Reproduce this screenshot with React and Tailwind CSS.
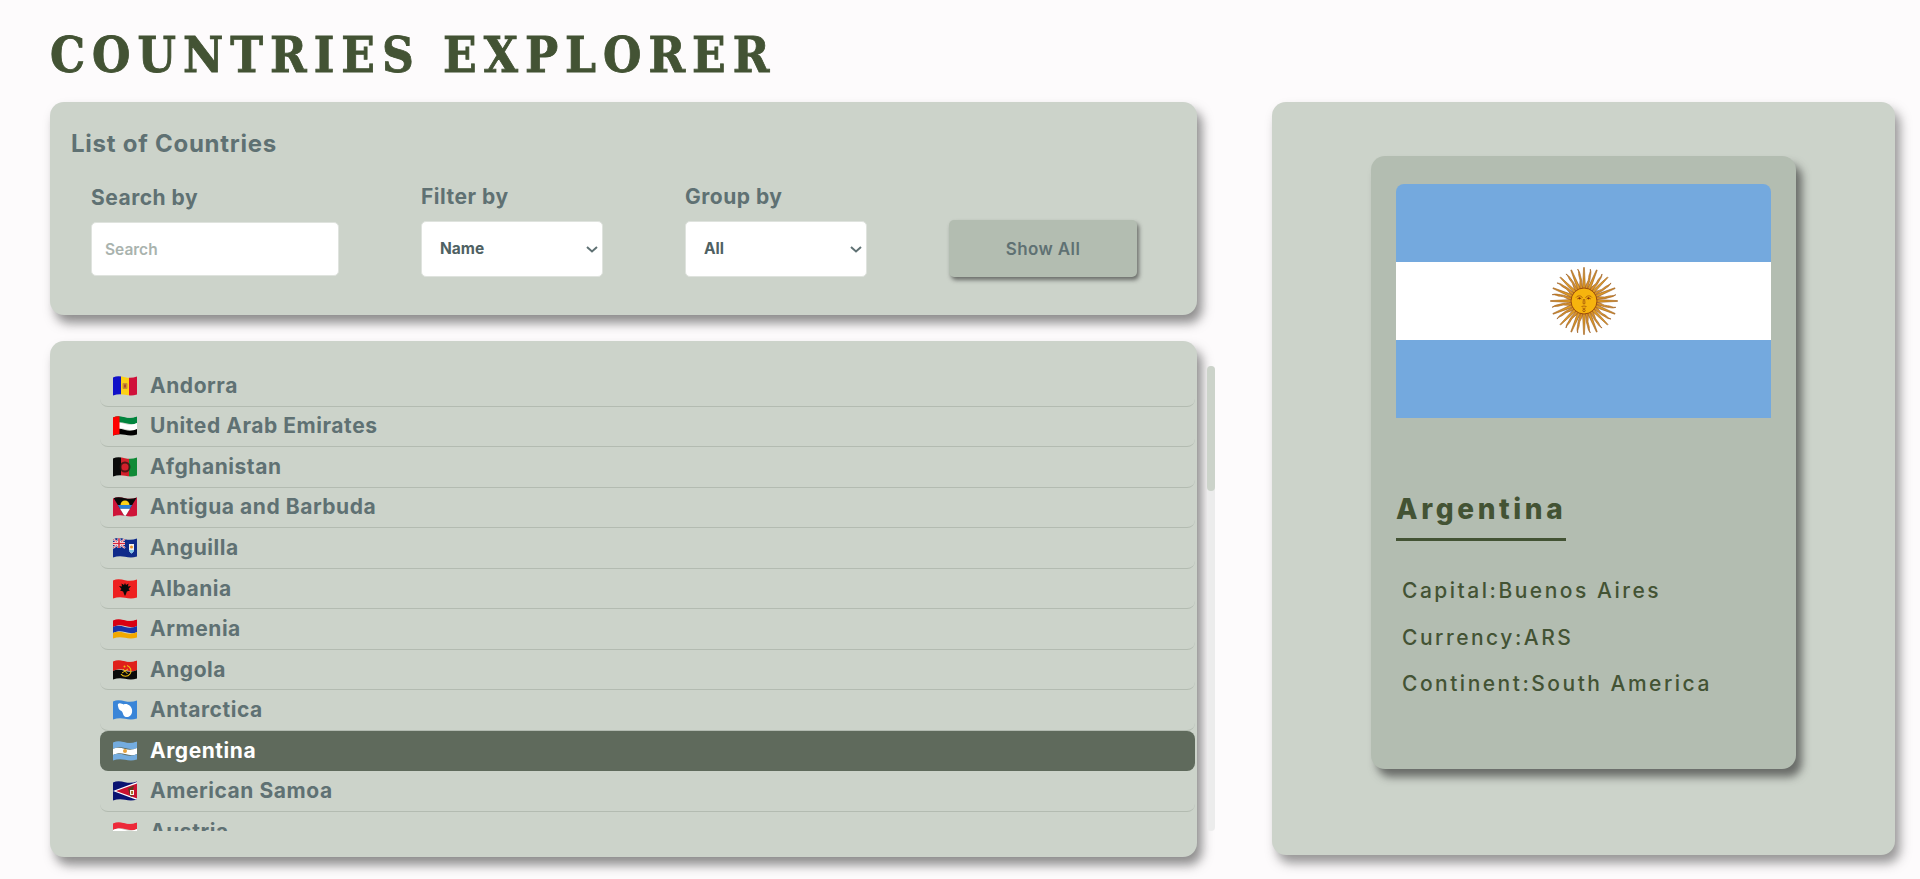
import React from "react";

const W = (y0, y1, fill, key) => (
  <path
    key={key}
    fill={fill}
    d={`M0 ${y0 + 1}C4 ${y0 - 1} 8 ${y0} 12 ${y0 + 1}S20 ${y0 + 2} 24 ${y0}V${y1}C20 ${y1 + 2} 16 ${y1 + 1} 12 ${y1}S4 ${y1 - 1} 0 ${y1 + 1}Z`}
  />
);

const Flag = ({ children }) => (
  <svg viewBox="0 0 24 20" className="w-6 h-5 shrink-0">
    <g clipPath="url(#flagwave)">{children}</g>
  </svg>
);

const flags = {
  ad: (
    <>
      <rect width="8" height="20" fill="#1010c8" />
      <rect x="8" width="8" height="20" fill="#fcd116" />
      <rect x="16" width="8" height="20" fill="#d0103a" />
      <rect x="9.5" y="7" width="5" height="6" rx="1" fill="#c7902f" />
      <rect x="11" y="8.5" width="2" height="3" fill="#b5452a" />
    </>
  ),
  ae: (
    <>
      {W(0, 7, "#00843d", 1)}
      {W(7, 13, "#ffffff", 2)}
      {W(13, 20, "#000000", 3)}
      <rect width="6.5" height="20" fill="#ff0000" />
    </>
  ),
  af: (
    <>
      <rect width="8" height="20" fill="#0a0a0a" />
      <rect x="8" width="8" height="20" fill="#d3202b" />
      <rect x="16" width="8" height="20" fill="#0f8a36" />
      <circle cx="12" cy="10" r="4.5" fill="none" stroke="#2a1410" strokeWidth="2" opacity="0.75" />
    </>
  ),
  ag: (
    <>
      <rect width="24" height="20" fill="#cf1439" />
      <path d="M0 0H24L12 20Z" fill="#0a0a0a" />
      <path d="M4.8 8H19.2L17 11.8H7Z" fill="#2a7fd6" />
      <path d="M7 11.8H17L12 20Z" fill="#ffffff" />
      <path d="M7.5 8a4.5 4.5 0 0 1 9 0Z" fill="#fcd116" />
    </>
  ),
  ai: (
    <>
      <rect width="24" height="20" fill="#0f2a8a" />
      <rect width="12" height="10" fill="#1b2f86" />
      <path d="M0 1L12 10M12 1L0 10" stroke="#fff" strokeWidth="2" />
      <path d="M0 1L12 10M12 1L0 10" stroke="#d5283c" strokeWidth="0.8" />
      <path d="M6 0V10M0 5.5H12" stroke="#fff" strokeWidth="3" />
      <path d="M6 0V10M0 5.5H12" stroke="#d5283c" strokeWidth="1.6" />
      <path d="M16 6H21V12C21 14 19 15 18.5 15.5C18 15 16 14 16 12Z" fill="#f4f1ec" />
      <path d="M16 12H21C21 14 19 15 18.5 15.5C18 15 16 14 16 12Z" fill="#7fc3e8" />
      <circle cx="18.5" cy="9" r="1.5" fill="#e8902a" />
    </>
  ),
  al: (
    <>
      <rect width="24" height="20" fill="#ee2020" />
      <path d="M12 4L13 6L15.5 4.5L15 7.5L18 7L15.5 10L17 11.5L13.8 12.5L13 15L12 17L11 15L10.2 12.5L7 11.5L8.5 10L6 7L9 7.5L8.5 4.5L11 6Z" fill="#0a0a0a" />
    </>
  ),
  am: (
    <>
      {W(0, 7, "#d90012", 1)}
      {W(7, 13, "#1a35a8", 2)}
      {W(13, 20, "#f2a800", 3)}
    </>
  ),
  ao: (
    <>
      {W(0, 10, "#e0201b", 1)}
      {W(10, 20, "#0a0a0a", 2)}
      <path d="M14 5.5A5.5 5.5 0 1 1 8 14" fill="none" stroke="#f0c010" strokeWidth="1.1" />
      <path d="M9 13L15 9M10 9L14.5 14" stroke="#f0c010" strokeWidth="1" />
      <circle cx="11.5" cy="6.5" r="1" fill="#f0c010" />
    </>
  ),
  aq: (
    <>
      <rect width="24" height="20" fill="#3a85d8" />
      <path d="M5 4C7 2.5 9 4 10.5 4.5C14 3 18 5.5 19 9.5C19.5 12.5 18.5 16 15 17C11 17.5 10.5 15 9.5 12.5C9 10.5 6 10.5 5.5 8C5.3 6.5 4.5 5.5 5 4Z" fill="#ffffff" />
    </>
  ),
  ar: (
    <>
      {W(0, 7, "#74acdf", 1)}
      {W(7, 13, "#ffffff", 2)}
      {W(13, 20, "#74acdf", 3)}
      <circle cx="12" cy="10" r="2" fill="#e8a33c" />
    </>
  ),
  as: (
    <>
      <rect width="24" height="20" fill="#0a1272" />
      <path d="M0 10L24 1V19Z" fill="#ffffff" />
      <path d="M3 10L24 2.6V17.4Z" fill="#c9102f" />
      <path d="M15 7.5L21 4.5L20 9L21 13L18 16L16.5 13Z" fill="#5a3a20" />
      <path d="M17 9H21V14H17Z" fill="#f4f0e6" />
      <path d="M18 10H20V13H18Z" fill="#a8722a" />
    </>
  ),
  at: (
    <>
      {W(0, 7, "#ed2939", 1)}
      {W(7, 13, "#ffffff", 2)}
      {W(13, 20, "#ed2939", 3)}
    </>
  ),
};

const countries = [
  ["ad", "Andorra"],
  ["ae", "United Arab Emirates"],
  ["af", "Afghanistan"],
  ["ag", "Antigua and Barbuda"],
  ["ai", "Anguilla"],
  ["al", "Albania"],
  ["am", "Armenia"],
  ["ao", "Angola"],
  ["aq", "Antarctica"],
  ["ar", "Argentina"],
  ["as", "American Samoa"],
  ["at", "Austria"],
];

const Sun = () => {
  const rays = Array.from({ length: 32 }, (_, i) => i * 11.25);
  return (
    <svg viewBox="-34 -34 68 68" className="w-[68px] h-[68px] shrink-0">
      {rays.map((a, i) =>
        i % 2 === 0 ? (
          <path
            key={a}
            transform={`rotate(${a})`}
            d="M-1.5 -12L-0.4 -33.5H0.4L1.5 -12Z"
            fill="#dc9a26"
            stroke="#96551a"
            strokeWidth="0.55"
          />
        ) : (
          <path
            key={a}
            transform={`rotate(${a})`}
            d="M-1.2 -12C-2.2 -17 1 -20 0 -24C-0.6 -27 1 -29 0 -32.5C2 -29 1.2 -27 1.6 -24C2.2 -20 0.6 -17 1.4 -12Z"
            fill="#d8932a"
            stroke="#96551a"
            strokeWidth="0.55"
          />
        )
      )}
      <circle r="13" fill="#f6b40e" stroke="#85340a" strokeWidth="0.8" />
      <g fill="none" stroke="#85340a" strokeWidth="0.6">
        <path d="M-8 -3.5C-6 -6 -2.5 -5.5 -1.5 -3M8 -3.5C6 -6 2.5 -5.5 1.5 -3" />
        <path d="M-7 -2Q-4.5 -4 -2.5 -2M7 -2Q4.5 -4 2.5 -2" />
        <path d="M-0.6 -2L-1 2.5Q0 3.5 1 2.5L0.6 -2" />
        <path d="M-2.5 5.5Q0 4.5 2.5 5.5M-1.6 7Q0 8 1.6 7" />
        <circle cx="0" cy="9.5" r="1.2" />
      </g>
      <circle cx="-4.5" cy="-2.7" r="1.1" fill="#85340a" />
      <circle cx="4.5" cy="-2.7" r="1.1" fill="#85340a" />
    </svg>
  );
};

const body = "font-['Inter','Liberation_Sans',sans-serif]";
const label = "text-[21px] leading-[26px] font-bold tracking-[0.5px] text-[#5f7173]";

const Select = ({ value }) => (
  <div className="relative">
    <select className={`appearance-none h-[56px] w-full rounded-[5px] border border-[#dfe3de] bg-white pl-[18px] text-[15.5px] font-bold text-[#4f6163] ${body}`}>
      <option>{value}</option>
    </select>
    <svg viewBox="0 0 12 7" className="absolute right-[5px] top-[25px] w-3 h-[7px] pointer-events-none">
      <path d="M1 1L6 5.5L11 1" fill="none" stroke="#5f7173" strokeWidth="2" />
    </svg>
  </div>
);

export default function App() {
  return (
    <div className={`min-h-screen bg-[#fdfbfc] pl-[50px] ${body}`}>
      <svg width="0" height="0" className="absolute">
        <defs>
          <clipPath id="flagwave">
            <path d="M0 1.5C4 -0.5 8 0.3 12 1.2S20 2 24 0.5V18.5C20 20 16 19.8 12 18.8S4 18 0 19.5Z" />
          </clipPath>
        </defs>
      </svg>

      <h1 className="h-[102px] pt-[26px] text-[49px] leading-[58px] font-bold tracking-[7px] text-[#435334] font-['DejaVu_Serif_Condensed','DejaVu_Serif',serif] [font-stretch:condensed] [-webkit-text-stroke:0.8px_#435334]">
        COUNTRIES EXPLORER
      </h1>

      <div className="flex gap-[75px] items-start">
        <div className="w-[1147px] shrink-0">
          <section className="h-[213px] rounded-[14px] bg-[#ccd3ca] pl-[21px] pt-[28px] shadow-[5px_8px_11px_rgba(50,50,50,0.55)]">
            <h2 className="text-[24px] leading-[28px] font-bold tracking-[0.75px] text-[#5f7173]">List of Countries</h2>
            <div className="flex items-end gap-[82px] pl-[20px] mt-[26px]">
              <label className="flex flex-col gap-[11px] w-[248px] pb-[1px]">
                <span className={label}>Search by</span>
                <input
                  placeholder="Search"
                  className={`h-[54px] w-full rounded-[5px] border border-[#dfe3de] bg-white px-[13px] text-[15.5px] font-semibold outline-none placeholder:text-[#a9b3ae] ${body}`}
                />
              </label>
              <label className="flex flex-col gap-[11px] w-[182px]">
                <span className={label}>Filter by</span>
                <Select value="Name" />
              </label>
              <label className="flex flex-col gap-[11px] w-[182px]">
                <span className={label}>Group by</span>
                <Select value="All" />
              </label>
              <button className="h-[57px] w-[188px] shrink-0 rounded-[5px] bg-[#b3bdb1] pt-[3px] text-[17px] font-semibold tracking-[0.4px] text-[#5f7173] shadow-[2px_3px_4px_rgba(40,40,40,0.6)]">
                Show All
              </button>
            </div>
          </section>

          <section className="mt-[26px] h-[516px] rounded-[14px] bg-[#ccd3ca] pl-[50px] pt-[25px] shadow-[5px_8px_11px_rgba(50,50,50,0.55)]">
            <div className="flex items-stretch gap-[12px] h-[465px] w-[1115px]">
              <ul className="w-[1095px] shrink-0 overflow-hidden">
                {countries.map(([code, name]) => {
                  const active = code === "ar";
                  return (
                    <li
                      key={code}
                      className={`flex items-center h-[40.55px] gap-[13px] pl-[13px] rounded-[8px] text-[21px] leading-[26px] font-bold tracking-[0.55px] ${
                        active
                          ? "bg-[#5f6a5c] text-white"
                          : "border-b border-[#b3bbb1] text-[#5f7173]"
                      }`}
                    >
                      <Flag>{flags[code]}</Flag>
                      <span>{name}</span>
                    </li>
                  );
                })}
              </ul>
              <div className="w-2 shrink-0 bg-[#ececec] rounded-full">
                <div className="h-[125px] rounded-full bg-[#ccd3ca]" />
              </div>
            </div>
          </section>
        </div>

        <section className="w-[623px] shrink-0 h-[753px] rounded-[14px] bg-[#ccd3ca] pl-[99px] pt-[54px] shadow-[5px_8px_11px_rgba(50,50,50,0.5)]">
          <div className="w-[425px] h-[613px] rounded-[14px] bg-[#b3bdb1] pl-[25px] pt-[28px] shadow-[6px_8px_9px_rgba(40,40,40,0.6)]">
            <div className="w-[375px] h-[234px] rounded-t-[8px] overflow-hidden flex flex-col">
              <div className="h-[78px] bg-[#74a9de]" />
              <div className="h-[78px] bg-white flex items-center justify-center">
                <Sun />
              </div>
              <div className="h-[78px] bg-[#74a9de]" />
            </div>
            <div className="mt-[73px] inline-block border-b-[3px] border-[#435334] pb-[11px] text-[28px] leading-[36px] font-extrabold tracking-[3.6px] text-[#435334]">
              Argentina
            </div>
            <div className="mt-[36px] pl-[6px] flex flex-col gap-[19px] text-[21px] leading-[27.5px] font-medium tracking-[2.5px] text-[#435334]">
              <p>Capital:Buenos Aires</p>
              <p>Currency:ARS</p>
              <p>Continent:South America</p>
            </div>
          </div>
        </section>
      </div>
    </div>
  );
}
